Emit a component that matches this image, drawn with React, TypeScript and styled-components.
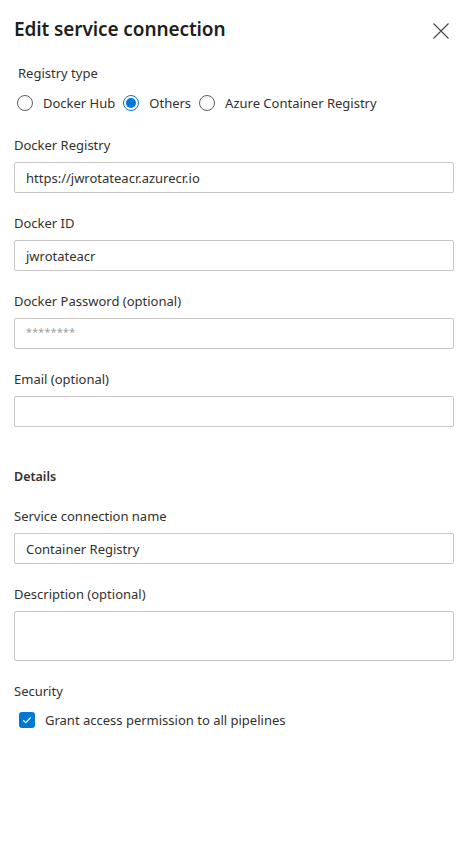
import React from 'react';
import styled, { createGlobalStyle } from 'styled-components';

const GlobalStyle = createGlobalStyle`
  html, body {
    margin: 0;
    padding: 0;
    background: #ffffff;
  }
  body {
    font-family: "Noto Sans", "Open Sans", sans-serif;
    color: #323130;
  }
  * {
    box-sizing: border-box;
  }
`;

const Panel = styled.div`
  width: 470px;
  height: 865px;
  padding: 0 16px 0 14px;
  background: #ffffff;
`;

const Header = styled.div`
  height: 58px;
  display: flex;
  align-items: center;
  justify-content: space-between;
`;

const Title = styled.h1`
  margin: 0;
  font-size: 19px;
  font-weight: 600;
  color: #201f1e;
  letter-spacing: -0.1px;
`;

const CloseButton = styled.button`
  width: 24px;
  height: 24px;
  margin-right: 1px;
  margin-top: 3px;
  padding: 0;
  border: none;
  background: transparent;
  display: flex;
  align-items: center;
  justify-content: center;
  color: #484644;
`;

const GroupLabel = styled.div`
  margin-top: 5px;
  margin-left: 4px;
  font-size: 13px;
  line-height: 20px;
  color: #323130;
`;

const RadioRow = styled.div`
  margin-top: 10px;
  margin-left: 3px;
  height: 20px;
  display: flex;
  align-items: center;
  gap: 8px;
`;

const RadioItem = styled.label`
  display: flex;
  align-items: center;
  gap: 10px;
  font-size: 13px;
  color: #323130;
`;

const RadioCircle = styled.span<{ $checked?: boolean }>`
  width: 16px;
  height: 16px;
  border-radius: 50%;
  border: 1px solid ${p => (p.$checked ? '#0078d4' : '#605e5c')};
  display: flex;
  align-items: center;
  justify-content: center;
  &::after {
    content: '';
    width: 10px;
    height: 10px;
    border-radius: 50%;
    background: ${p => (p.$checked ? '#0078d4' : 'transparent')};
  }
`;

const Form = styled.div<{ $top: number }>`
  margin-top: ${p => p.$top}px;
  display: flex;
  flex-direction: column;
  gap: 20px;
`;

const Field = styled.div`
  display: flex;
  flex-direction: column;
  gap: 7px;
`;

const Label = styled.label`
  font-size: 13px;
  line-height: 20px;
  color: #323130;
`;

const SectionTitle = styled.div`
  margin-top: 20px;
  margin-bottom: -1px;
  font-size: 12.5px;
  font-weight: 600;
  line-height: 20px;
  color: #323130;
`;

const TextBox = styled.div<{ $tall?: boolean; $muted?: boolean }>`
  width: 100%;
  height: ${p => (p.$tall ? 50 : 31)}px;
  border: 1px solid #c8c6c4;
  border-radius: 2px;
  padding: 0 11px;
  display: flex;
  align-items: ${p => (p.$tall ? 'flex-start' : 'center')};
  font-size: ${p => (p.$muted ? 10.5 : 13)}px;
  color: ${p => (p.$muted ? '#a19f9d' : '#323130')};
  letter-spacing: ${p => (p.$muted ? '0.4px' : '0')};
  padding-bottom: ${p => (p.$muted ? 3 : 0)}px;
`;

const CheckRow = styled.label`
  margin-top: -11px;
  margin-left: 5px;
  display: flex;
  align-items: center;
  gap: 10px;
  font-size: 13px;
  line-height: 20px;
  color: #323130;
`;

const CheckBox = styled.span`
  width: 16px;
  height: 16px;
  border-radius: 3px;
  background: #0078d4;
  display: flex;
  align-items: center;
  justify-content: center;
`;

type FieldProps = { label: string; value?: string; tall?: boolean; muted?: boolean };

const InputField: React.FC<FieldProps> = ({ label, value, tall, muted }) => (
  <Field>
    <Label>{label}</Label>
    <TextBox $tall={tall} $muted={muted}>
      {value}
    </TextBox>
  </Field>
);

const registryTypes = [
  { name: 'Docker Hub', checked: false },
  { name: 'Others', checked: true },
  { name: 'Azure Container Registry', checked: false },
];

export default function App() {
  return (
    <>
      <GlobalStyle />
      <Panel>
        <Header>
          <Title>Edit service connection</Title>
          <CloseButton aria-label="Close">
            <svg width="16" height="16" viewBox="0 0 16 16">
              <path d="M0.5 0.5 L15.5 15.5 M15.5 0.5 L0.5 15.5" stroke="currentColor" strokeWidth="1.1" fill="none" />
            </svg>
          </CloseButton>
        </Header>
        <GroupLabel>Registry type</GroupLabel>
        <RadioRow>
          {registryTypes.map(r => (
            <RadioItem key={r.name}>
              <RadioCircle $checked={r.checked} />
              {r.name}
            </RadioItem>
          ))}
        </RadioRow>
        <Form $top={22}>
          <InputField label="Docker Registry" value="https://jwrotateacr.azurecr.io" />
          <InputField label="Docker ID" value="jwrotateacr" />
          <InputField label="Docker Password (optional)" value="********" muted />
          <InputField label="Email (optional)" />
          <SectionTitle>Details</SectionTitle>
          <InputField label="Service connection name" value="Container Registry" />
          <InputField label="Description (optional)" tall />
          <Label>Security</Label>
          <CheckRow>
            <CheckBox>
              <svg width="12" height="12" viewBox="0 0 12 12">
                <path d="M2.2 6.2 L4.8 8.6 L9.8 3.4" stroke="#ffffff" strokeWidth="1.2" fill="none" />
              </svg>
            </CheckBox>
            Grant access permission to all pipelines
          </CheckRow>
        </Form>
      </Panel>
    </>
  );
}
